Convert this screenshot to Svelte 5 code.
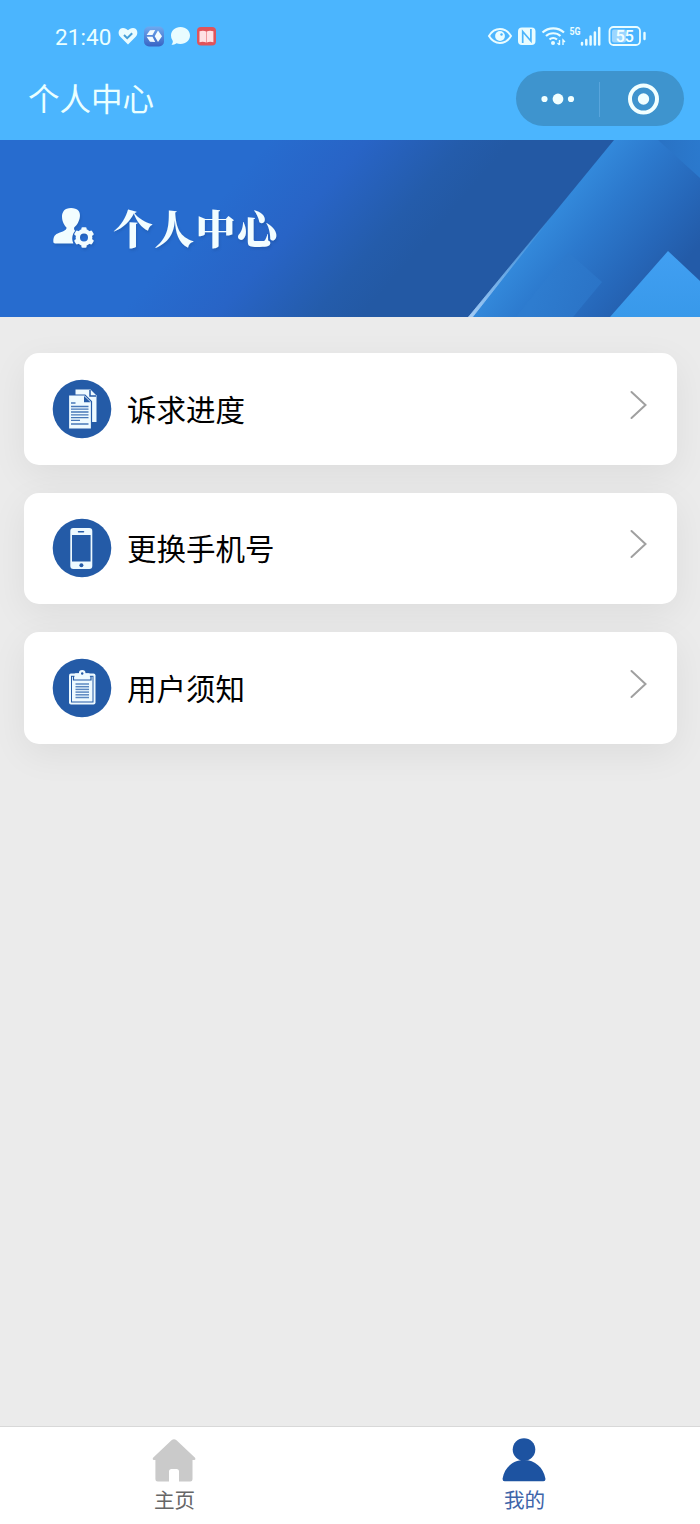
<script>
  const rows = [
    { icon: 'docs', label: '诉求进度' },
    { icon: 'phone', label: '更换手机号' },
    { icon: 'clipboard', label: '用户须知' }
  ];
  const textLines = [26, 28.7, 31.4, 34.1, 36.8, 39.5];
  const teeth = [0, 60, 120, 180, 240, 300];
</script>

<div class="screen">
  <header>
    <div class="status">
      <span class="time">21:40</span>
      <svg class="left-icons" width="102" height="24" viewBox="0 0 102 24">
        <path d="M12 20.500 4.300 12.800C1 9.200 3 4 7 4c2.200 0 3.800 1.200 5 2.300C13.200 5.200 14.800 4 17 4c4 0 6 5.200 2.700 8.800Z" fill="#e9fcff" />
        <path d="m8 11 3.200 3.200 5-5" fill="none" stroke="#459ed7" stroke-width="2" />
        <defs>
          <linearGradient id="cube" x2="0" y2="1"><stop stop-color="#6fa9ef" /><stop offset="1" stop-color="#3764c4" /></linearGradient>
        </defs>
        <rect x="28" y="2.500" width="20" height="20" rx="5" fill="url(#cube)" />
        <path d="m34 6.300 5.200-.2-2.700 5H30.600Zm-3.400 6.400h5.900l2.700 5.200-5.200-.2Zm11.400-6.200 4 5.700-4 5.700-3.300-5.700Z" fill="#f1fbff" />
        <path d="M64.500 3c5.600 0 9.500 3.700 9.500 8.500S70 20 64.500 20c-1.500 0-2.800-.2-4-.8-1.500 1.100-3.200 1.500-5 1.500 1-1.100 1.400-2.300 1.300-3.700A8 8 0 0 1 55 11.500C55 6.700 59 3 64.500 3Z" fill="#e9fcff" />
        <rect x="81" y="3" width="19" height="18.500" rx="4" fill="#e0545b" />
        <path d="M83.500 7.300q4-1 6.700.2v11q-3-1.200-6.700-.3Zm7.200.2q3-1.200 6.700-.2v10.900q-3.700-.9-6.700.3Z" fill="#ffe1e5" />
      </svg>
      <svg class="right-icons" width="160" height="26" viewBox="0 0 160 26">
        <g fill="none" stroke="#e9fcff">
          <path d="M2 13C7.500 3.800 18.500 3.800 24 13 18.500 22.200 7.500 22.200 2 13Z" stroke-width="2" />
          <path d="M55.500 9.500c6-5.500 15.500-5.500 21.500 0M59 13c4-3.700 10.500-3.700 14.500 0M62.500 16.500c2-1.900 5.300-1.900 7.500 0" stroke-width="2.200" />
          <rect x="122.500" y="4" width="30.500" height="18" rx="4" stroke-width="1.800" />
        </g>
        <circle cx="13" cy="13" r="4.900" fill="#e9fcff" />
        <circle cx="14.500" cy="11.500" r="1.200" fill="#4bb5fc" />
        <rect x="31" y="4.500" width="17.500" height="17.500" rx="4" fill="#e9fcff" />
        <path d="M35.700 20V8.500l8.200 9.500V6" fill="none" stroke="#4bb5fc" stroke-width="1.700" />
        <circle cx="66" cy="20" r="2" fill="#e9fcff" />
        <path d="M72.500 17v5m-2-2 2 2M76 22v-5l2 2" stroke="#e9fcff" stroke-width="1.400" fill="none" />
        <text x="82.500" y="11.500" class="network" textLength="11" lengthAdjust="spacingAndGlyphs">5G</text>
        <path d="M95 20v1.500M99.300 17v4.500M103.600 13.500v8M107.900 9.500v12M112.200 5v16.500" stroke="#e9fcff" stroke-width="2.500" stroke-linecap="round" />
        <rect x="125" y="6.500" width="14" height="13" rx="2" fill="#9cd6ff" />
        <path d="M157.500 10v6" stroke="#e9fcff" stroke-width="2.400" stroke-linecap="round" />
        <text x="128.500" y="18.700" class="battery" textLength="18.500">55</text>
      </svg>
    </div>
    <div class="nav">
      <h1>个人中心</h1>
      <div class="capsule">
        <svg width="168" height="55" viewBox="0 0 168 55">
          <g fill="#f1ffff"><circle cx="28.500" cy="28" r="3.100" /><circle cx="42" cy="28" r="5.400" /><circle cx="55" cy="28" r="3.100" /></g>
          <path d="M83.500 11v35" stroke="#58a5dc" />
          <circle cx="127.500" cy="28" r="13.500" fill="none" stroke="#f1ffff" stroke-width="4" />
          <circle cx="127.500" cy="28" r="5.700" fill="#f1ffff" />
        </svg>
      </div>
    </div>
  </header>

  <section class="banner">
    <svg class="scene" width="700" height="177" viewBox="0 0 700 177">
      <defs>
        <linearGradient id="base" gradientUnits="userSpaceOnUse" x1="270" y1="0" x2="410" y2="120">
          <stop stop-color="#276ccf" /><stop offset=".4" stop-color="#2864c6" /><stop offset=".8" stop-color="#245cab" /><stop offset="1" stop-color="#2359a4" />
        </linearGradient>
        <linearGradient id="band" gradientUnits="userSpaceOnUse" x1="562" y1="63" x2="665" y2="147">
          <stop stop-color="#3389db" /><stop offset=".3" stop-color="#2c79cd" /><stop offset=".7" stop-color="#2667b9" /><stop offset="1" stop-color="#235ba8" />
        </linearGradient>
        <linearGradient id="corner" x2="1" y2="0"><stop stop-color="#2972c4" /><stop offset="1" stop-color="#2b79cd" /></linearGradient>
        <linearGradient id="peak" x2="0" y2="1"><stop stop-color="#419ff2" /><stop offset="1" stop-color="#3899ea" /></linearGradient>
        <linearGradient id="shine" gradientUnits="userSpaceOnUse" x1="470" y1="177" x2="555" y2="73">
          <stop stop-color="#a4ccf5" /><stop offset=".45" stop-color="#71aee8" stop-opacity=".8" /><stop offset="1" stop-color="#4597df" stop-opacity="0" />
        </linearGradient>
        <linearGradient id="tile" gradientUnits="userSpaceOnUse" x1="540" y1="145" x2="590" y2="165"><stop stop-color="#2e7ccf" /><stop offset="1" stop-color="#2b74c7" /></linearGradient>
      </defs>
      <rect width="700" height="177" fill="url(#base)" />
      <path d="M614 0h86v177H469Z" fill="url(#band)" />
      <path d="M658 0h42v38Z" fill="url(#corner)" />
      <path d="m568 112 34 30-29 35h-57Z" fill="url(#tile)" />
      <path d="m668 111 32 30v36h-90Z" fill="url(#peak)" />
      <path d="m468.500 177 90-109.500-86 109.500Z" fill="url(#shine)" stroke="url(#shine)" stroke-width=".8" />
    </svg>
    <div class="banner-title">
      <svg width="44" height="44" viewBox="0 0 44 44" fill="#f2fdff">
        <path d="M12 4.500C14 1.500 23.500 1 26.500 4.700c2.500 3.200 1.500 8.300-.5 12-1 2-2.600 3.600-3.800 4.700-.4 1.700.1 2.700 1 3.400-3.400 4-3.600 8.500-1.800 12.700H3.200c-1.300 0-1.900-.7-1.900-2 0-5 1.600-7.200 5.900-8.800 4-1.500 7.600-2.700 7.300-5.300-2-1.800-4.500-5.800-4.500-11C9.900 8.500 10.600 6.500 12 4.500Z" />
        <circle cx="32" cy="31.500" r="6.200" fill="none" stroke="#f2fdff" stroke-width="4.400" />
        {#each teeth as angle}
          <rect x="29.400" y="21.300" width="5.200" height="4" rx="1.200" transform={`rotate(${angle} 32 31.500)`} />
        {/each}
      </svg>
      <h2>个人中心</h2>
    </div>
  </section>

  <main>
    {#each rows as row}
      <div class="card">
        <svg class="badge" width="60" height="60" viewBox="0 0 60 60">
          <circle cx="30" cy="30" r="29.300" fill="#245ba7" />
          {#if row.icon === 'docs'}
            <path d="M23.500 10.500h15l6 6V43h-21Z" fill="#eefaff" />
            <path d="M38 11v6h6" fill="none" stroke="#245ba7" stroke-width="1.500" />
            <path d="M16.500 16h16.500l6.500 6.500v27.500h-23Z" fill="#eefaff" stroke="#245ba7" stroke-width="1.200" />
            <path d="M32 17v6.200h6.600Z" fill="#245ba7" />
            <path d="M19 24H23.500M19 27.500H36.500M19 30.200H36.500M19 33H36.500M19 35.800H36.500M19 38.600H36.500M19 41.400H28M19 45H36.500" stroke="#4778b8" stroke-width="1.300" />
          {:else if row.icon === 'phone'}
            <rect x="18.300" y="10" width="22" height="41" rx="3" fill="#eefaff" />
            <rect x="20" y="17" width="18.600" height="26.500" fill="#245ba7" />
            <path d="M26.500 13.700h5" stroke="#245ba7" stroke-width="1.500" stroke-linecap="round" />
            <circle cx="29.400" cy="47.300" r="2" fill="#245ba7" />
          {:else}
            <rect x="17" y="15.500" width="26.500" height="31" rx="2" fill="#eefaff" />
            <rect x="19.500" y="18.300" width="21.500" height="25.700" fill="none" stroke="#245ba7" stroke-width="1" />
            <path d="M21.500 18v4h17.500v-4" fill="none" stroke="#245ba7" stroke-width="1.200" />
            <path d="M22.500 20.500v-4q0-1.300 1.500-1.300h2.900a3.300 3.300 0 0 1 6.600 0h2.900q1.500 0 1.500 1.300v4Z" fill="#eefaff" />
            <circle cx="30.200" cy="15.500" r="1.200" fill="#245ba7" />
            {#each textLines as y}
              <path d={`M23.500 ${y}h13.500`} stroke="#5b88c1" stroke-width="1.500" />
            {/each}
          {/if}
        </svg>
        <span>{row.label}</span>
        <svg class="chevron" width="20" height="30" viewBox="0 0 20 30"><path d="m2.500 2 14 13-14 13" fill="none" stroke="#a0a0a0" stroke-width="2" stroke-linecap="round" /></svg>
      </div>
    {/each}
  </main>

  <footer>
    <div class="tab">
      <svg width="44" height="46" viewBox="0 0 44 46"><path d="M19.500 2.200Q22 .2 24.500 2.200L42.800 19.500q1.500 2-.7 2.500H40.500v19.300q0 2.200-2.200 2.200H27V33.500q0-2.500-2.500-2.500h-5Q17 31 17 33.500v10H5.700q-2.300 0-2.300-2.200V22H2q-2.200-.5-.7-2.500Z" fill="#cacaca" /></svg>
      <span>主页</span>
    </div>
    <div class="tab active">
      <svg width="44" height="46" viewBox="0 0 44 46" fill="#1d53a1"><circle cx="22" cy="11.500" r="11.300" /><path d="M.6 40.500C2.500 29.500 11 22 22 22S41.500 29.500 43.400 40.500q.4 2.800-2 2.800H2.600q-2.300 0-2-2.800Z" /></svg>
      <span>我的</span>
    </div>
  </footer>
</div>

<style>
  :global(body) { margin: 0; }
  .screen { width: 700px; height: 1524px; display: flex; flex-direction: column; background: #ebebeb; font-family: "Noto Sans CJK SC", sans-serif; overflow: hidden; }
  svg { display: block; flex: none; }
  header { height: 140px; background: #4bb5fe; color: #eaffff; flex: none; }
  .status { height: 71px; box-sizing: border-box; padding: 1px 53.500px 0 55px; display: flex; align-items: center; }
  .time { font: 400 22.500px/30px Roboto, sans-serif; letter-spacing: .1px; width: 61px; white-space: nowrap; padding-top: 2px; }
  .right-icons { margin-left: auto; }
  .network { font: 700 10.500px Roboto, sans-serif; fill: #e9fcff; }
  .battery { font: 500 16.500px Roboto, sans-serif; fill: #f3ffff; }
  .nav { display: flex; justify-content: space-between; padding: 0 16px 0 28px; }
  h1 { margin: 0; font-weight: 400; font-size: 31.500px; line-height: 53px; }
  .capsule { width: 168px; height: 55px; border-radius: 28px; background: #3e94ce; }
  .banner { height: 177px; flex: none; display: grid; }
  .scene, .banner-title { grid-area: 1 / 1; }
  .banner-title { z-index: 1; display: flex; align-items: center; padding: 0 0 1px 52px; filter: drop-shadow(1px 2px 1px #1747894d); }
  h2 { margin: -3px 0 0 17px; font: 900 40px/60px "Noto Serif CJK SC", "Noto Sans CJK SC", serif; letter-spacing: 1.300px; color: #f2fdff; }
  main { flex: 1; display: flex; flex-direction: column; gap: 28px; padding: 36px 23px 0 24px; }
  .card { height: 111.500px; border-radius: 15px; background: #fff; display: flex; align-items: center; box-sizing: border-box; padding: 0 28px; box-shadow: 0 10px 36px #00000010; }
  .card span { font-size: 29.500px; line-height: 44px; color: #000; margin: -2px 0 0 15px; }
  .chevron { margin: 0 0 8px auto; }
  footer { height: 98px; box-sizing: border-box; border-top: 1px solid #d8d8d8; background: #fff; display: grid; grid-template-columns: 1fr 1fr; }
  .tab { display: flex; flex-direction: column; align-items: center; padding: 11px 2px 0 0; color: #666; font-size: 20.600px; line-height: 30px; }
  .tab span { padding-left: 1px; }
  .tab.active { color: #3e65a9; }
</style>
